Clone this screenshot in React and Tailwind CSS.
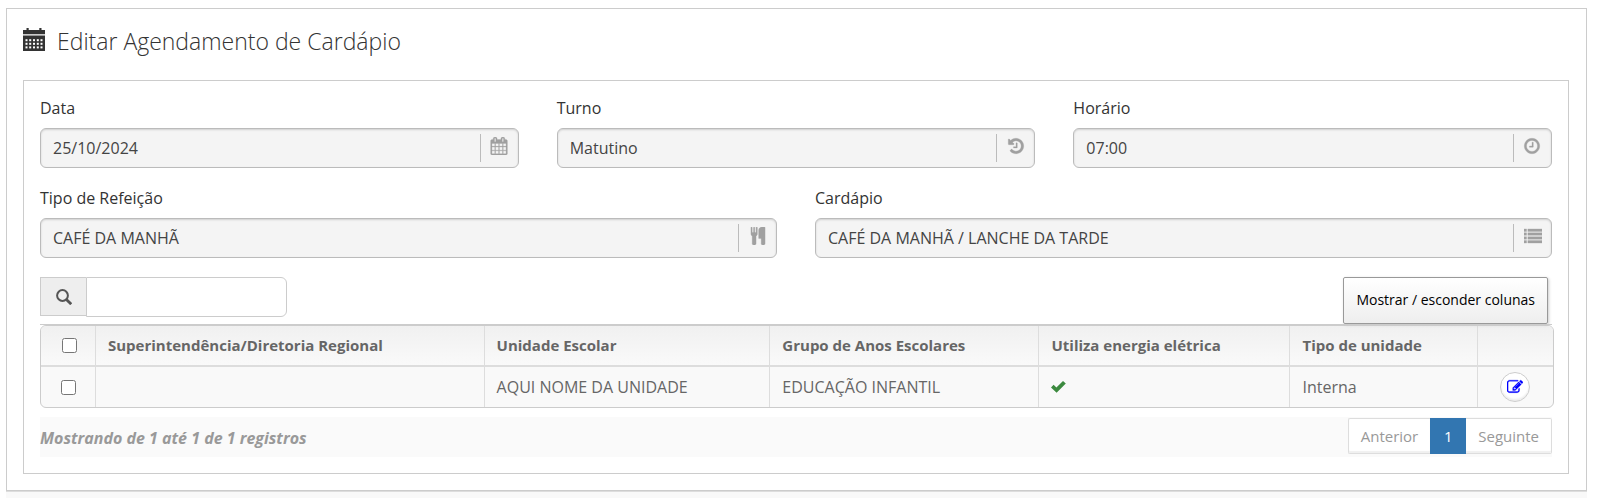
const ICONS = {
  calendar: "M192 1664h288v-288h-288v288zm352 0h320v-288h-320v288zm-352-352h288v-320h-288v320zm352 0h320v-320h-320v320zm-352-384h288v-288h-288v288zm736 736h320v-288h-320v288zm-384-736h320v-288h-320v288zm768 736h288v-288h-288v288zm-384-352h320v-320h-320v320zm-352-864v-288q0-13-9.5-22.5t-22.5-9.5h-64q-13 0-22.5 9.5t-9.5 22.5v288q0 13 9.5 22.5t22.5 9.5h64q13 0 22.5-9.5t9.5-22.5zm736 864h288v-320h-288v320zm-384-384h320v-288h-320v288zm384 0h288v-288h-288v288zm32-480v-288q0-13-9.5-22.5t-22.5-9.5h-64q-13 0-22.5 9.5t-9.5 22.5v288q0 13 9.5 22.5t22.5 9.5h64q13 0 22.5-9.5t9.5-22.5zm384-64v1280q0 52-38 90t-90 38h-1408q-52 0-90-38t-38-90v-1280q0-52 38-90t90-38h128v-96q0-66 47-113t113-47h64q66 0 113 47t47 113v96h384v-96q0-66 47-113t113-47h64q66 0 113 47t47 113v96h128q52 0 90 38t38 90z",
  history: "M1664 896q0 156-61 298t-164 245-245 164-298 61q-172 0-327-72.5t-264-204.5q-7-10-6.5-22.5t8.5-20.5l137-138q10-9 25-9 16 2 23 12 73 95 179 147t225 52q104 0 198.5-40.5t163.5-109.5 109.5-163.5 40.5-198.5-40.5-198.5-109.5-163.5-163.5-109.5-198.5-40.5q-98 0-188 35.5t-160 101.5l137 138q31 30 14 69-17 40-59 40h-448q-26 0-45-19t-19-45v-448q0-42 40-59 39-17 69 14l130 129q107-101 244.5-156.5t284.5-55.5q156 0 298 61t245 164 164 245 61 298zm-640-288v448q0 14-9 23t-23 9h-320q-14 0-23-9t-9-23v-64q0-14 9-23t23-9h224v-352q0-14 9-23t23-9h64q14 0 23 9t9 23z",
  clock: "M1024 544v448q0 14-9 23t-23 9h-320q-14 0-23-9t-9-23v-64q0-14 9-23t23-9h224v-352q0-14 9-23t23-9h64q14 0 23 9t9 23zm416 352q0-148-73-273t-198-198-273-73-273 73-198 198-73 273 73 273 198 198 273 73 273-73 198-198 73-273zm224 0q0 209-103 385.5t-279.5 279.5-385.5 103-385.5-103-279.5-279.5-103-385.5 103-385.5 279.5-279.5 385.5-103 385.5 103 279.5 279.5 103 385.5z",
  cutlery: "M832 64v640q0 61-35.5 111t-92.5 70v779q0 52-38 90t-90 38h-128q-52 0-90-38t-38-90v-779q-57-20-92.5-70t-35.5-111v-640q0-26 19-45t45-19 45 19 19 45v416q0 26 19 45t45 19 45-19 19-45v-416q0-26 19-45t45-19 45 19 19 45v416q0 26 19 45t45 19 45-19 19-45v-416q0-26 19-45t45-19 45 19 19 45zm768 0v1600q0 52-38 90t-90 38h-128q-52 0-90-38t-38-90v-512h-224q-13 0-22.5-9.5t-9.5-22.5v-800q0-132 94-226t226-94h256q26 0 45 19t19 45z",
  list: "M0 192h256v256H0zM0 576h256v256H0zM0 960h256v256H0zM0 1344h256v256H0zM384 192h1408v256H384zM384 576h1408v256H384zM384 960h1408v256H384zM384 1344h1408v256H384z",
  edit: "M888 1184l116-116-152-152-116 116v56h96v96h56zm440-720q-16-16-33 1l-350 350q-17 17-1 33t33-1l350-350q17-17 1-33zm80 594v190q0 119-84.5 203.5t-203.5 84.5h-832q-119 0-203.5-84.5t-84.5-203.5v-832q0-119 84.5-203.5t203.5-84.5h832q63 0 117 25 15 7 18 23 3 17-9 29l-49 49q-14 14-32 8-23-6-45-6h-832q-66 0-113 47t-47 113v832q0 66 47 113t113 47h832q66 0 113-47t47-113v-126q0-13 9-22l64-64q15-15 35-7t20 29zm-96-738l288 288-672 672h-288v-288zm444 132l-92 92-288-288 92-92q28-28 68-28t68 28l152 152q28 28 28 68t-28 68z",
};

function Icon({ name, className }) {
  return (
    <svg viewBox="0 0 1792 1792" fill="currentColor" stroke="currentColor" strokeWidth="30" aria-hidden="true" className={className}>
      <path d={ICONS[name]} />
    </svg>
  );
}

function TitleIcon() {
  const cols = [2.5, 6.2, 10, 13.8, 17.5];
  const rows = [11.2, 14.8, 18.4];
  return (
    <svg viewBox="0 0 22 24" className="h-6 w-[22px] text-[#333]" aria-hidden="true">
      <path fill="currentColor" d="M0 2h3.5V0h2.2v2h10.6V0h2.2v2H22v4.2H0zM0 7.6h22V23H0z" />
      {rows.map((y) => cols.map((x) => <rect key={`${x}-${y}`} x={x} y={y} width="2" height="2" fill="#fff" />))}
    </svg>
  );
}

function Field({ id, label, value, icon }) {
  return (
    <div className="flex flex-col">
      <label htmlFor={id} className="mb-2 text-base leading-6 text-[#333]">{label}</label>
      <div className="flex h-10 items-center rounded-md border border-[#bbb] bg-[#f4f4f4] shadow-[inset_0_1px_2px_rgba(0,0,0,0.15)]">
        <input id={id} readOnly value={value} className="h-full min-w-0 flex-1 bg-transparent px-3 text-base text-[#444] outline-none" />
        <span className="flex h-7 w-[38px] justify-center border-l border-[#bbb] pt-[3px] text-[#a0a0a0]">
          <Icon name={icon} className="size-[18px]" />
        </span>
      </div>
    </div>
  );
}

const HEADERS = ["Superintendência/Diretoria Regional", "Unidade Escolar", "Grupo de Anos Escolares", "Utiliza energia elétrica", "Tipo de unidade"];

export default function App() {
  return (
    <div className="bg-white pt-2 pr-[11px] pl-[6px] font-['Open_Sans',sans-serif]">
      <main className="border border-[#ccc] pr-[17px] pb-4 pl-4">
        <h1 className="flex h-[71px] items-start gap-3 pt-4 text-[23px] leading-8 font-light text-[#333]">
          <span className="pt-[3px]"><TitleIcon /></span>
          Editar Agendamento de Cardápio
        </h1>
        <section className="border border-[#ccc] px-4 pt-[15px] pb-4">
          <div className="grid grid-cols-3 gap-[38px]">
            <Field id="data" label="Data" value="25/10/2024" icon="calendar" />
            <Field id="turno" label="Turno" value="Matutino" icon="history" />
            <Field id="horario" label="Horário" value="07:00" icon="clock" />
          </div>
          <div className="mt-[18px] grid grid-cols-2 gap-[38px]">
            <Field id="refeicao" label="Tipo de Refeição" value="CAFÉ DA MANHÃ" icon="cutlery" />
            <Field id="cardapio" label="Cardápio" value="CAFÉ DA MANHÃ / LANCHE DA TARDE" icon="list" />
          </div>

          <div className="mt-[19px] flex items-start justify-between border-b border-[#ccc]">
            <div className="flex items-start">
              <label htmlFor="busca" className="flex h-[39px] w-[46px] items-center justify-center border border-r-0 border-[#ccc] bg-[#eee] text-[#555]">
                <svg viewBox="0 0 16 16" className="size-4" fill="none" stroke="currentColor" aria-hidden="true">
                  <circle cx="6.5" cy="6.5" r="5.4" strokeWidth="2" />
                  <path d="M10.4 10.4L15.2 15.2" strokeWidth="2.8" />
                </svg>
              </label>
              <input id="busca" type="search" aria-label="Buscar" className="h-10 w-[201px] rounded-r-md border border-[#ccc] px-3 text-base outline-none" />
            </div>
            <button type="button" className="mr-1 h-[47px] rounded-xs border border-[#999] bg-linear-to-b from-white to-[#eee] px-3 pb-[2px] text-sm text-black shadow-[1px_1px_3px_#ccc]">
              Mostrar / esconder colunas
            </button>
          </div>

          <div className="-mr-[2px] overflow-hidden rounded-md border border-[#ccc] bg-[#f9f9f9]">
            <table className="w-full table-fixed border-separate border-spacing-0 text-left text-[#666]">
              <colgroup>
                <col className="w-[55px]" />
                <col className="w-[25.7%]" />
                <col className="w-[18.9%]" />
                <col className="w-[17.8%]" />
                <col className="w-[16.6%]" />
                <col className="w-[12.4%]" />
                <col />
              </colgroup>
              <thead>
                <tr className="bg-linear-to-b from-[#f0f0f0] to-[#fafafa]">
                  <th scope="col" className="h-[41px] border-r border-b-2 border-[#ddd] p-0 pl-[3px]">
                    <input type="checkbox" aria-label="Selecionar todos" className="mx-auto block size-[15px]" />
                  </th>
                  {HEADERS.map((h) => (
                    <th key={h} scope="col" className="border-r border-b-2 border-[#ddd] px-3 text-[15px] font-bold">{h}</th>
                  ))}
                  <th scope="col" aria-label="Ações" className="border-b-2 border-[#ddd]" />
                </tr>
              </thead>
              <tbody className="text-base">
                <tr>
                  <td className="h-10 border-r border-[#ddd] p-0">
                    <input type="checkbox" aria-label="Selecionar registro" className="mx-auto block size-[15px]" />
                  </td>
                  <td className="border-r border-[#ddd] px-3" />
                  <td className="border-r border-[#ddd] px-3">AQUI NOME DA UNIDADE</td>
                  <td className="border-r border-[#ddd] px-3">EDUCAÇÃO INFANTIL</td>
                  <td className="border-r border-[#ddd] px-3">
                    <svg viewBox="0 0 15 12" className="h-3 w-[15px] text-[#3c8a3f]" role="img" aria-label="Sim">
                      <path fill="currentColor" d="M0 6.4L2.6 3.8 5.4 6.6 12 0 14.8 2.6 5.6 11.8z" />
                    </svg>
                  </td>
                  <td className="border-r border-[#ddd] px-3">Interna</td>
                  <td className="p-0">
                    <button type="button" aria-label="Editar" className="mx-auto flex size-[30px] items-center justify-center rounded-full border border-[#ccc] bg-white text-[#00f] shadow-[inset_0_-2px_2px_#eee]">
                      <Icon name="edit" className="size-4" />
                    </button>
                  </td>
                </tr>
              </tbody>
            </table>
          </div>

          <div className="mt-[9px] flex h-10 items-start justify-between bg-[#fafafa]">
            <p className="pt-[9px] text-base leading-6 font-bold text-[#999] italic">Mostrando de 1 até 1 de 1 registros</p>
            <nav aria-label="Paginação" className="mt-px flex h-9 text-[15px] leading-[34px] text-[#999]">
              <button type="button" className="rounded-l-xs border border-r-0 border-[#ddd] bg-white px-3 shadow-[inset_0_-2px_1px_#f0f0f0]">Anterior</button>
              <button type="button" aria-current="page" className="w-9 bg-[#3276b1] text-white">1</button>
              <button type="button" className="rounded-r-xs border border-l-0 border-[#ddd] bg-white px-3 shadow-[inset_0_-2px_1px_#f0f0f0]">Seguinte</button>
            </nav>
          </div>
        </section>
      </main>
      <div className="h-[7px] border-t border-[#ddd] bg-[#f9f9f9]" />
    </div>
  );
}
